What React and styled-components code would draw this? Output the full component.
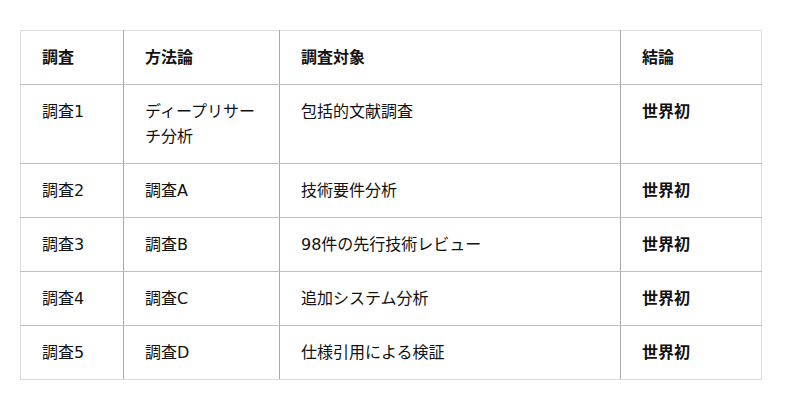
import React from "react";
import styled, { createGlobalStyle } from "styled-components";

const Global = createGlobalStyle`
  html, body { margin: 0; padding: 0; background: #fff; }
  body {
    font-family: "DejaVu Sans", "Noto Sans CJK JP", sans-serif;
    color: #111;
  }
`;

const Wrap = styled.div`
  padding: 30px 0 0 20px;
`;

const Table = styled.table`
  border-collapse: collapse;
  border: 1px solid #dcdcdc;
  font-size: 16px;
  line-height: 25px;
`;

const Th = styled.th`
  text-align: left;
  font-weight: 700;
  padding: 14px 21px 14px 21px;
  width: ${(p) => p.$w}px;
  box-sizing: border-box;
  border-bottom: 1px solid #bfbfbf;
  border-left: ${(p) => (p.$first ? "1px solid #dcdcdc" : "1px solid #a9a9a9")};
  vertical-align: top;
`;

const Td = styled.td`
  padding: 14px 21px;
  vertical-align: top;
  font-weight: ${(p) => (p.$bold ? 700 : 400)};
  border-top: 1px solid #bfbfbf;
  border-left: ${(p) => (p.$first ? "1px solid #dcdcdc" : "1px solid #a9a9a9")};
  border-bottom: ${(p) => (p.$last ? "1px solid #dcdcdc" : "1px solid #bfbfbf")};
`;

const cols = [
  { label: "調査", w: 103 },
  { label: "方法論", w: 156 },
  { label: "調査対象", w: 341 },
  { label: "結論", w: 141 },
];

const rows = [
  ["調査1", "ディープリサーチ分析", "包括的文献調査", "世界初"],
  ["調査2", "調査A", "技術要件分析", "世界初"],
  ["調査3", "調査B", "98件の先行技術レビュー", "世界初"],
  ["調査4", "調査C", "追加システム分析", "世界初"],
  ["調査5", "調査D", "仕様引用による検証", "世界初"],
];

export default function App() {
  return (
    <>
      <Global />
      <Wrap>
        <Table>
          <thead>
            <tr>
              {cols.map((c, i) => (
                <Th key={c.label} $w={c.w} $first={i === 0}>
                  {c.label}
                </Th>
              ))}
            </tr>
          </thead>
          <tbody>
            {rows.map((r, ri) => (
              <tr key={ri}>
                {r.map((cell, ci) => (
                  <Td
                    key={ci}
                    $first={ci === 0}
                    $bold={ci === 3}
                    $last={ri === rows.length - 1}
                  >
                    {cell}
                  </Td>
                ))}
              </tr>
            ))}
          </tbody>
        </Table>
      </Wrap>
    </>
  );
}
